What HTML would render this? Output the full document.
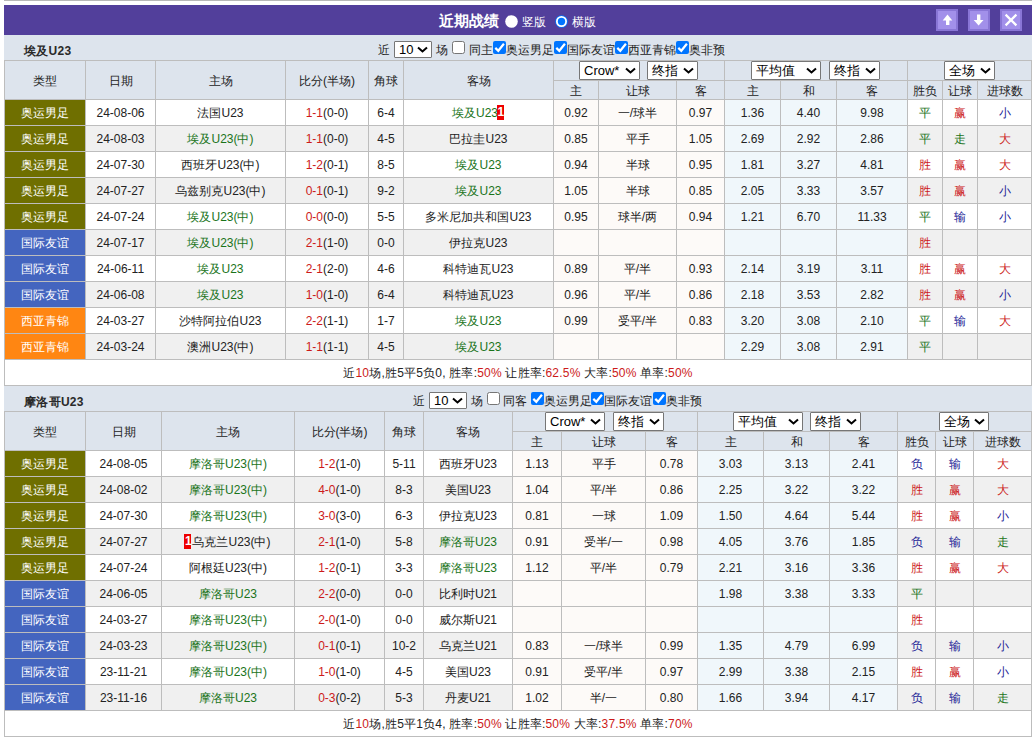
<!DOCTYPE html><html><head><meta charset="utf-8"><style>
html,body{margin:0;padding:0;background:#fff;}
body{width:1032px;height:738px;position:relative;overflow:hidden;font-family:"Liberation Sans",sans-serif;font-size:12px;color:#222;}
div{position:absolute;box-sizing:border-box;}
.c{text-align:center;white-space:nowrap;overflow:visible;}
.g{color:#1a741a}.r{color:#cc1a1a}.b{color:#1c2396}
.bd{display:inline-block;background:#e00;color:#fff;font-weight:bold;line-height:15px;height:15px;width:7px;text-align:center;overflow:hidden;vertical-align:baseline;position:relative;top:2.5px;left:-1px;letter-spacing:-0.5px}
</style></head><body>

<div style="left:4px;top:0px;width:1028px;height:1px;background:#b8b8b8"></div>
<div style="left:4px;top:5px;width:1028px;height:30px;background:#523f9b"></div>
<div style="left:439px;top:5px;width:62px;height:30px;color:#fff;font-weight:bold;font-size:15px;line-height:31px;white-space:nowrap">近期战绩</div>
<svg style="position:absolute;left:505px;top:15px" width="13" height="13"><circle cx="6.5" cy="6.5" r="6.3" fill="#fff"/></svg>
<div style="left:522px;top:5px;width:30px;height:30px;color:#fff;font-size:12px;line-height:35px;white-space:nowrap">竖版</div>
<svg style="position:absolute;left:555px;top:15px" width="13" height="13"><circle cx="6.5" cy="6.5" r="6.3" fill="#0075ff"/><circle cx="6.5" cy="6.5" r="5.5" fill="#fff"/><circle cx="6.5" cy="6.5" r="3.7" fill="#0075ff"/></svg>
<div style="left:572px;top:5px;width:30px;height:30px;color:#fff;font-size:12px;line-height:35px;white-space:nowrap">横版</div>
<div style="left:936px;top:9px;width:22px;height:22px;background:#a290ea;border:2px solid #8976d6"></div>
<svg style="position:absolute;left:936px;top:9px" width="22" height="22"><polygon points="11.5,5.5 16.3,11.5 6.7,11.5" fill="#fff"/><rect x="10" y="11" width="3.4" height="5" fill="#fff"/></svg>
<div style="left:968px;top:9px;width:22px;height:22px;background:#a290ea;border:2px solid #8976d6"></div>
<svg style="position:absolute;left:968px;top:9px" width="22" height="22"><polygon points="10.6,16.6 15.5,10.9 5.7,10.9" fill="#fff"/><rect x="9" y="5.5" width="3.4" height="5.6" fill="#fff"/></svg>
<div style="left:1000px;top:9px;width:22px;height:22px;background:#a290ea;border:2px solid #8976d6"></div>
<svg style="position:absolute;left:1000px;top:9px" width="22" height="22"><path d="M5.6,5.6 L16.4,16.4 M16.4,5.6 L5.6,16.4" stroke="#fff" stroke-width="2.2"/></svg>
<div style="left:4px;top:35px;width:1028px;height:25px;background:#dde4ed"></div>
<div style="left:24px;top:35px;width:200px;height:25px;font-weight:bold;font-size:12px;line-height:32px;color:#2a2a2a;white-space:nowrap;letter-spacing:0.3px">埃及U23</div>
<div style="left:378px;top:35px;width:100px;height:25px;font-size:12px;line-height:31px;color:#222;white-space:nowrap">近</div>
<div style="left:394px;top:41px;width:38px;height:17px;background:#fff;border:1px solid #767676;border-radius:1px;"></div>
<div class="c" style="left:399px;top:41px;width:28px;height:17px;font-size:13px;line-height:17px;color:#000;text-align:left;white-space:nowrap">10</div>
<svg style="position:absolute;left:417px;top:46px" width="11" height="8"><polyline points="1,1.5 5.5,5.5 10,1.5" fill="none" stroke="#000" stroke-width="2"/></svg>
<div style="left:436px;top:35px;width:100px;height:25px;font-size:12px;line-height:31px;color:#222;white-space:nowrap">场</div>
<svg style="position:absolute;left:452px;top:41px" width="13" height="13"><rect x="0.5" y="0.5" width="12" height="12" rx="2" fill="#fff" stroke="#767676" stroke-width="1"/></svg>
<div style="left:469px;top:35px;width:100px;height:25px;font-size:12px;line-height:31px;color:#222;white-space:nowrap">同主</div>
<svg style="position:absolute;left:493px;top:41px" width="13" height="13"><rect x="0" y="0" width="13" height="13" rx="2" fill="#0075ff"/><polyline points="2.3,6.9 5.3,9.8 10.9,2.8" fill="none" stroke="#fff" stroke-width="2.2"/></svg>
<div style="left:506px;top:35px;width:100px;height:25px;font-size:12px;line-height:31px;color:#222;white-space:nowrap">奥运男足</div>
<svg style="position:absolute;left:554px;top:41px" width="13" height="13"><rect x="0" y="0" width="13" height="13" rx="2" fill="#0075ff"/><polyline points="2.3,6.9 5.3,9.8 10.9,2.8" fill="none" stroke="#fff" stroke-width="2.2"/></svg>
<div style="left:567px;top:35px;width:100px;height:25px;font-size:12px;line-height:31px;color:#222;white-space:nowrap">国际友谊</div>
<svg style="position:absolute;left:615px;top:41px" width="13" height="13"><rect x="0" y="0" width="13" height="13" rx="2" fill="#0075ff"/><polyline points="2.3,6.9 5.3,9.8 10.9,2.8" fill="none" stroke="#fff" stroke-width="2.2"/></svg>
<div style="left:628px;top:35px;width:100px;height:25px;font-size:12px;line-height:31px;color:#222;white-space:nowrap">西亚青锦</div>
<svg style="position:absolute;left:676px;top:41px" width="13" height="13"><rect x="0" y="0" width="13" height="13" rx="2" fill="#0075ff"/><polyline points="2.3,6.9 5.3,9.8 10.9,2.8" fill="none" stroke="#fff" stroke-width="2.2"/></svg>
<div style="left:689px;top:35px;width:100px;height:25px;font-size:12px;line-height:31px;color:#222;white-space:nowrap">奥非预</div>
<div style="left:4px;top:60px;width:1028px;height:40px;background:#dde4ed"></div>
<div class="c" style="left:5px;top:62px;width:80px;height:38px;line-height:38px;color:#222">类型</div>
<div class="c" style="left:86px;top:62px;width:69px;height:38px;line-height:38px;color:#222">日期</div>
<div class="c" style="left:156px;top:62px;width:129px;height:38px;line-height:38px;color:#222">主场</div>
<div class="c" style="left:286px;top:62px;width:82px;height:38px;line-height:38px;color:#222">比分(半场)</div>
<div class="c" style="left:369px;top:62px;width:34px;height:38px;line-height:38px;color:#222">角球</div>
<div class="c" style="left:404px;top:62px;width:149px;height:38px;line-height:38px;color:#222">客场</div>
<div class="c" style="left:554px;top:82px;width:44px;height:18px;line-height:18px;color:#222">主</div>
<div class="c" style="left:599px;top:82px;width:77px;height:18px;line-height:18px;color:#222">让球</div>
<div class="c" style="left:677px;top:82px;width:47px;height:18px;line-height:18px;color:#222">客</div>
<div class="c" style="left:725px;top:82px;width:55px;height:18px;line-height:18px;color:#222">主</div>
<div class="c" style="left:781px;top:82px;width:55px;height:18px;line-height:18px;color:#222">和</div>
<div class="c" style="left:837px;top:82px;width:70px;height:18px;line-height:18px;color:#222">客</div>
<div class="c" style="left:908px;top:82px;width:34px;height:18px;line-height:18px;color:#222">胜负</div>
<div class="c" style="left:943px;top:82px;width:34px;height:18px;line-height:18px;color:#222">让球</div>
<div class="c" style="left:978px;top:82px;width:53px;height:18px;line-height:18px;color:#222">进球数</div>
<div style="left:85px;top:100px;width:468px;height:25px;background:#fff"></div>
<div style="left:907px;top:100px;width:124px;height:25px;background:#fff"></div>
<div style="left:553px;top:100px;width:171px;height:25px;background:#fdfaf8"></div>
<div style="left:724px;top:100px;width:183px;height:25px;background:#f0f7fb"></div>
<div style="left:5px;top:100px;width:80px;height:25px;background:#6f6f00"></div>
<div class="c" style="left:5px;top:101px;width:80px;height:25px;line-height:25px;color:#fff">奥运男足</div>
<div class="c" style="left:86px;top:101px;width:69px;height:25px;line-height:25px;">24-08-06</div>
<div class="c" style="left:156px;top:101px;width:129px;height:25px;line-height:25px;">法国U23</div>
<div class="c" style="left:286px;top:101px;width:82px;height:25px;line-height:25px;"><span class="r">1-1</span>(0-0)</div>
<div class="c" style="left:369px;top:101px;width:34px;height:25px;line-height:25px;">6-4</div>
<div class="c" style="left:404px;top:101px;width:149px;height:25px;line-height:25px;"><span class="g">埃及U23</span><span class="bd">1</span></div>
<div class="c" style="left:554px;top:101px;width:44px;height:25px;line-height:25px;">0.92</div>
<div class="c" style="left:599px;top:101px;width:77px;height:25px;line-height:25px;">一/球半</div>
<div class="c" style="left:677px;top:101px;width:47px;height:25px;line-height:25px;">0.97</div>
<div class="c" style="left:725px;top:101px;width:55px;height:25px;line-height:25px;">1.36</div>
<div class="c" style="left:781px;top:101px;width:55px;height:25px;line-height:25px;">4.40</div>
<div class="c" style="left:837px;top:101px;width:70px;height:25px;line-height:25px;">9.98</div>
<div class="c" style="left:908px;top:101px;width:34px;height:25px;line-height:25px;"><span class="g">平</span></div>
<div class="c" style="left:943px;top:101px;width:34px;height:25px;line-height:25px;"><span class="r">赢</span></div>
<div class="c" style="left:978px;top:101px;width:53px;height:25px;line-height:25px;"><span class="b">小</span></div>
<div style="left:85px;top:126px;width:468px;height:25px;background:#f0f0f0"></div>
<div style="left:907px;top:126px;width:124px;height:25px;background:#f0f0f0"></div>
<div style="left:553px;top:126px;width:171px;height:25px;background:#fdfaf8"></div>
<div style="left:724px;top:126px;width:183px;height:25px;background:#f0f7fb"></div>
<div style="left:5px;top:126px;width:80px;height:25px;background:#6f6f00"></div>
<div class="c" style="left:5px;top:127px;width:80px;height:25px;line-height:25px;color:#fff">奥运男足</div>
<div class="c" style="left:86px;top:127px;width:69px;height:25px;line-height:25px;">24-08-03</div>
<div class="c" style="left:156px;top:127px;width:129px;height:25px;line-height:25px;"><span class="g">埃及U23(中)</span></div>
<div class="c" style="left:286px;top:127px;width:82px;height:25px;line-height:25px;"><span class="r">1-1</span>(0-0)</div>
<div class="c" style="left:369px;top:127px;width:34px;height:25px;line-height:25px;">4-5</div>
<div class="c" style="left:404px;top:127px;width:149px;height:25px;line-height:25px;">巴拉圭U23</div>
<div class="c" style="left:554px;top:127px;width:44px;height:25px;line-height:25px;">0.85</div>
<div class="c" style="left:599px;top:127px;width:77px;height:25px;line-height:25px;">平手</div>
<div class="c" style="left:677px;top:127px;width:47px;height:25px;line-height:25px;">1.05</div>
<div class="c" style="left:725px;top:127px;width:55px;height:25px;line-height:25px;">2.69</div>
<div class="c" style="left:781px;top:127px;width:55px;height:25px;line-height:25px;">2.92</div>
<div class="c" style="left:837px;top:127px;width:70px;height:25px;line-height:25px;">2.86</div>
<div class="c" style="left:908px;top:127px;width:34px;height:25px;line-height:25px;"><span class="g">平</span></div>
<div class="c" style="left:943px;top:127px;width:34px;height:25px;line-height:25px;"><span class="g">走</span></div>
<div class="c" style="left:978px;top:127px;width:53px;height:25px;line-height:25px;"><span class="r">大</span></div>
<div style="left:85px;top:152px;width:468px;height:25px;background:#fff"></div>
<div style="left:907px;top:152px;width:124px;height:25px;background:#fff"></div>
<div style="left:553px;top:152px;width:171px;height:25px;background:#fdfaf8"></div>
<div style="left:724px;top:152px;width:183px;height:25px;background:#f0f7fb"></div>
<div style="left:5px;top:152px;width:80px;height:25px;background:#6f6f00"></div>
<div class="c" style="left:5px;top:153px;width:80px;height:25px;line-height:25px;color:#fff">奥运男足</div>
<div class="c" style="left:86px;top:153px;width:69px;height:25px;line-height:25px;">24-07-30</div>
<div class="c" style="left:156px;top:153px;width:129px;height:25px;line-height:25px;">西班牙U23(中)</div>
<div class="c" style="left:286px;top:153px;width:82px;height:25px;line-height:25px;"><span class="r">1-2</span>(0-1)</div>
<div class="c" style="left:369px;top:153px;width:34px;height:25px;line-height:25px;">8-5</div>
<div class="c" style="left:404px;top:153px;width:149px;height:25px;line-height:25px;"><span class="g">埃及U23</span></div>
<div class="c" style="left:554px;top:153px;width:44px;height:25px;line-height:25px;">0.94</div>
<div class="c" style="left:599px;top:153px;width:77px;height:25px;line-height:25px;">半球</div>
<div class="c" style="left:677px;top:153px;width:47px;height:25px;line-height:25px;">0.95</div>
<div class="c" style="left:725px;top:153px;width:55px;height:25px;line-height:25px;">1.81</div>
<div class="c" style="left:781px;top:153px;width:55px;height:25px;line-height:25px;">3.27</div>
<div class="c" style="left:837px;top:153px;width:70px;height:25px;line-height:25px;">4.81</div>
<div class="c" style="left:908px;top:153px;width:34px;height:25px;line-height:25px;"><span class="r">胜</span></div>
<div class="c" style="left:943px;top:153px;width:34px;height:25px;line-height:25px;"><span class="r">赢</span></div>
<div class="c" style="left:978px;top:153px;width:53px;height:25px;line-height:25px;"><span class="r">大</span></div>
<div style="left:85px;top:178px;width:468px;height:25px;background:#f0f0f0"></div>
<div style="left:907px;top:178px;width:124px;height:25px;background:#f0f0f0"></div>
<div style="left:553px;top:178px;width:171px;height:25px;background:#fdfaf8"></div>
<div style="left:724px;top:178px;width:183px;height:25px;background:#f0f7fb"></div>
<div style="left:5px;top:178px;width:80px;height:25px;background:#6f6f00"></div>
<div class="c" style="left:5px;top:179px;width:80px;height:25px;line-height:25px;color:#fff">奥运男足</div>
<div class="c" style="left:86px;top:179px;width:69px;height:25px;line-height:25px;">24-07-27</div>
<div class="c" style="left:156px;top:179px;width:129px;height:25px;line-height:25px;">乌兹别克U23(中)</div>
<div class="c" style="left:286px;top:179px;width:82px;height:25px;line-height:25px;"><span class="r">0-1</span>(0-1)</div>
<div class="c" style="left:369px;top:179px;width:34px;height:25px;line-height:25px;">9-2</div>
<div class="c" style="left:404px;top:179px;width:149px;height:25px;line-height:25px;"><span class="g">埃及U23</span></div>
<div class="c" style="left:554px;top:179px;width:44px;height:25px;line-height:25px;">1.05</div>
<div class="c" style="left:599px;top:179px;width:77px;height:25px;line-height:25px;">半球</div>
<div class="c" style="left:677px;top:179px;width:47px;height:25px;line-height:25px;">0.85</div>
<div class="c" style="left:725px;top:179px;width:55px;height:25px;line-height:25px;">2.05</div>
<div class="c" style="left:781px;top:179px;width:55px;height:25px;line-height:25px;">3.33</div>
<div class="c" style="left:837px;top:179px;width:70px;height:25px;line-height:25px;">3.57</div>
<div class="c" style="left:908px;top:179px;width:34px;height:25px;line-height:25px;"><span class="r">胜</span></div>
<div class="c" style="left:943px;top:179px;width:34px;height:25px;line-height:25px;"><span class="r">赢</span></div>
<div class="c" style="left:978px;top:179px;width:53px;height:25px;line-height:25px;"><span class="b">小</span></div>
<div style="left:85px;top:204px;width:468px;height:25px;background:#fff"></div>
<div style="left:907px;top:204px;width:124px;height:25px;background:#fff"></div>
<div style="left:553px;top:204px;width:171px;height:25px;background:#fdfaf8"></div>
<div style="left:724px;top:204px;width:183px;height:25px;background:#f0f7fb"></div>
<div style="left:5px;top:204px;width:80px;height:25px;background:#6f6f00"></div>
<div class="c" style="left:5px;top:205px;width:80px;height:25px;line-height:25px;color:#fff">奥运男足</div>
<div class="c" style="left:86px;top:205px;width:69px;height:25px;line-height:25px;">24-07-24</div>
<div class="c" style="left:156px;top:205px;width:129px;height:25px;line-height:25px;"><span class="g">埃及U23(中)</span></div>
<div class="c" style="left:286px;top:205px;width:82px;height:25px;line-height:25px;"><span class="r">0-0</span>(0-0)</div>
<div class="c" style="left:369px;top:205px;width:34px;height:25px;line-height:25px;">5-5</div>
<div class="c" style="left:404px;top:205px;width:149px;height:25px;line-height:25px;">多米尼加共和国U23</div>
<div class="c" style="left:554px;top:205px;width:44px;height:25px;line-height:25px;">0.95</div>
<div class="c" style="left:599px;top:205px;width:77px;height:25px;line-height:25px;">球半/两</div>
<div class="c" style="left:677px;top:205px;width:47px;height:25px;line-height:25px;">0.94</div>
<div class="c" style="left:725px;top:205px;width:55px;height:25px;line-height:25px;">1.21</div>
<div class="c" style="left:781px;top:205px;width:55px;height:25px;line-height:25px;">6.70</div>
<div class="c" style="left:837px;top:205px;width:70px;height:25px;line-height:25px;">11.33</div>
<div class="c" style="left:908px;top:205px;width:34px;height:25px;line-height:25px;"><span class="g">平</span></div>
<div class="c" style="left:943px;top:205px;width:34px;height:25px;line-height:25px;"><span class="b">输</span></div>
<div class="c" style="left:978px;top:205px;width:53px;height:25px;line-height:25px;"><span class="b">小</span></div>
<div style="left:85px;top:230px;width:468px;height:25px;background:#f0f0f0"></div>
<div style="left:907px;top:230px;width:124px;height:25px;background:#f0f0f0"></div>
<div style="left:553px;top:230px;width:171px;height:25px;background:#fdfaf8"></div>
<div style="left:724px;top:230px;width:183px;height:25px;background:#f0f7fb"></div>
<div style="left:5px;top:230px;width:80px;height:25px;background:#4465bf"></div>
<div class="c" style="left:5px;top:231px;width:80px;height:25px;line-height:25px;color:#fff">国际友谊</div>
<div class="c" style="left:86px;top:231px;width:69px;height:25px;line-height:25px;">24-07-17</div>
<div class="c" style="left:156px;top:231px;width:129px;height:25px;line-height:25px;"><span class="g">埃及U23(中)</span></div>
<div class="c" style="left:286px;top:231px;width:82px;height:25px;line-height:25px;"><span class="r">2-1</span>(1-0)</div>
<div class="c" style="left:369px;top:231px;width:34px;height:25px;line-height:25px;">0-0</div>
<div class="c" style="left:404px;top:231px;width:149px;height:25px;line-height:25px;">伊拉克U23</div>
<div class="c" style="left:554px;top:231px;width:44px;height:25px;line-height:25px;"></div>
<div class="c" style="left:599px;top:231px;width:77px;height:25px;line-height:25px;"></div>
<div class="c" style="left:677px;top:231px;width:47px;height:25px;line-height:25px;"></div>
<div class="c" style="left:725px;top:231px;width:55px;height:25px;line-height:25px;"></div>
<div class="c" style="left:781px;top:231px;width:55px;height:25px;line-height:25px;"></div>
<div class="c" style="left:837px;top:231px;width:70px;height:25px;line-height:25px;"></div>
<div class="c" style="left:908px;top:231px;width:34px;height:25px;line-height:25px;"><span class="r">胜</span></div>
<div class="c" style="left:943px;top:231px;width:34px;height:25px;line-height:25px;"></div>
<div class="c" style="left:978px;top:231px;width:53px;height:25px;line-height:25px;"></div>
<div style="left:85px;top:256px;width:468px;height:25px;background:#fff"></div>
<div style="left:907px;top:256px;width:124px;height:25px;background:#fff"></div>
<div style="left:553px;top:256px;width:171px;height:25px;background:#fdfaf8"></div>
<div style="left:724px;top:256px;width:183px;height:25px;background:#f0f7fb"></div>
<div style="left:5px;top:256px;width:80px;height:25px;background:#4465bf"></div>
<div class="c" style="left:5px;top:257px;width:80px;height:25px;line-height:25px;color:#fff">国际友谊</div>
<div class="c" style="left:86px;top:257px;width:69px;height:25px;line-height:25px;">24-06-11</div>
<div class="c" style="left:156px;top:257px;width:129px;height:25px;line-height:25px;"><span class="g">埃及U23</span></div>
<div class="c" style="left:286px;top:257px;width:82px;height:25px;line-height:25px;"><span class="r">2-1</span>(2-0)</div>
<div class="c" style="left:369px;top:257px;width:34px;height:25px;line-height:25px;">4-6</div>
<div class="c" style="left:404px;top:257px;width:149px;height:25px;line-height:25px;">科特迪瓦U23</div>
<div class="c" style="left:554px;top:257px;width:44px;height:25px;line-height:25px;">0.89</div>
<div class="c" style="left:599px;top:257px;width:77px;height:25px;line-height:25px;">平/半</div>
<div class="c" style="left:677px;top:257px;width:47px;height:25px;line-height:25px;">0.93</div>
<div class="c" style="left:725px;top:257px;width:55px;height:25px;line-height:25px;">2.14</div>
<div class="c" style="left:781px;top:257px;width:55px;height:25px;line-height:25px;">3.19</div>
<div class="c" style="left:837px;top:257px;width:70px;height:25px;line-height:25px;">3.11</div>
<div class="c" style="left:908px;top:257px;width:34px;height:25px;line-height:25px;"><span class="r">胜</span></div>
<div class="c" style="left:943px;top:257px;width:34px;height:25px;line-height:25px;"><span class="r">赢</span></div>
<div class="c" style="left:978px;top:257px;width:53px;height:25px;line-height:25px;"><span class="r">大</span></div>
<div style="left:85px;top:282px;width:468px;height:25px;background:#f0f0f0"></div>
<div style="left:907px;top:282px;width:124px;height:25px;background:#f0f0f0"></div>
<div style="left:553px;top:282px;width:171px;height:25px;background:#fdfaf8"></div>
<div style="left:724px;top:282px;width:183px;height:25px;background:#f0f7fb"></div>
<div style="left:5px;top:282px;width:80px;height:25px;background:#4465bf"></div>
<div class="c" style="left:5px;top:283px;width:80px;height:25px;line-height:25px;color:#fff">国际友谊</div>
<div class="c" style="left:86px;top:283px;width:69px;height:25px;line-height:25px;">24-06-08</div>
<div class="c" style="left:156px;top:283px;width:129px;height:25px;line-height:25px;"><span class="g">埃及U23</span></div>
<div class="c" style="left:286px;top:283px;width:82px;height:25px;line-height:25px;"><span class="r">1-0</span>(1-0)</div>
<div class="c" style="left:369px;top:283px;width:34px;height:25px;line-height:25px;">6-4</div>
<div class="c" style="left:404px;top:283px;width:149px;height:25px;line-height:25px;">科特迪瓦U23</div>
<div class="c" style="left:554px;top:283px;width:44px;height:25px;line-height:25px;">0.96</div>
<div class="c" style="left:599px;top:283px;width:77px;height:25px;line-height:25px;">平/半</div>
<div class="c" style="left:677px;top:283px;width:47px;height:25px;line-height:25px;">0.86</div>
<div class="c" style="left:725px;top:283px;width:55px;height:25px;line-height:25px;">2.18</div>
<div class="c" style="left:781px;top:283px;width:55px;height:25px;line-height:25px;">3.53</div>
<div class="c" style="left:837px;top:283px;width:70px;height:25px;line-height:25px;">2.82</div>
<div class="c" style="left:908px;top:283px;width:34px;height:25px;line-height:25px;"><span class="r">胜</span></div>
<div class="c" style="left:943px;top:283px;width:34px;height:25px;line-height:25px;"><span class="r">赢</span></div>
<div class="c" style="left:978px;top:283px;width:53px;height:25px;line-height:25px;"><span class="b">小</span></div>
<div style="left:85px;top:308px;width:468px;height:25px;background:#fff"></div>
<div style="left:907px;top:308px;width:124px;height:25px;background:#fff"></div>
<div style="left:553px;top:308px;width:171px;height:25px;background:#fdfaf8"></div>
<div style="left:724px;top:308px;width:183px;height:25px;background:#f0f7fb"></div>
<div style="left:5px;top:308px;width:80px;height:25px;background:#ff8612"></div>
<div class="c" style="left:5px;top:309px;width:80px;height:25px;line-height:25px;color:#fff">西亚青锦</div>
<div class="c" style="left:86px;top:309px;width:69px;height:25px;line-height:25px;">24-03-27</div>
<div class="c" style="left:156px;top:309px;width:129px;height:25px;line-height:25px;">沙特阿拉伯U23</div>
<div class="c" style="left:286px;top:309px;width:82px;height:25px;line-height:25px;"><span class="r">2-2</span>(1-1)</div>
<div class="c" style="left:369px;top:309px;width:34px;height:25px;line-height:25px;">1-7</div>
<div class="c" style="left:404px;top:309px;width:149px;height:25px;line-height:25px;"><span class="g">埃及U23</span></div>
<div class="c" style="left:554px;top:309px;width:44px;height:25px;line-height:25px;">0.99</div>
<div class="c" style="left:599px;top:309px;width:77px;height:25px;line-height:25px;">受平/半</div>
<div class="c" style="left:677px;top:309px;width:47px;height:25px;line-height:25px;">0.83</div>
<div class="c" style="left:725px;top:309px;width:55px;height:25px;line-height:25px;">3.20</div>
<div class="c" style="left:781px;top:309px;width:55px;height:25px;line-height:25px;">3.08</div>
<div class="c" style="left:837px;top:309px;width:70px;height:25px;line-height:25px;">2.10</div>
<div class="c" style="left:908px;top:309px;width:34px;height:25px;line-height:25px;"><span class="g">平</span></div>
<div class="c" style="left:943px;top:309px;width:34px;height:25px;line-height:25px;"><span class="b">输</span></div>
<div class="c" style="left:978px;top:309px;width:53px;height:25px;line-height:25px;"><span class="r">大</span></div>
<div style="left:85px;top:334px;width:468px;height:25px;background:#f0f0f0"></div>
<div style="left:907px;top:334px;width:124px;height:25px;background:#f0f0f0"></div>
<div style="left:553px;top:334px;width:171px;height:25px;background:#fdfaf8"></div>
<div style="left:724px;top:334px;width:183px;height:25px;background:#f0f7fb"></div>
<div style="left:5px;top:334px;width:80px;height:25px;background:#ff8612"></div>
<div class="c" style="left:5px;top:335px;width:80px;height:25px;line-height:25px;color:#fff">西亚青锦</div>
<div class="c" style="left:86px;top:335px;width:69px;height:25px;line-height:25px;">24-03-24</div>
<div class="c" style="left:156px;top:335px;width:129px;height:25px;line-height:25px;">澳洲U23(中)</div>
<div class="c" style="left:286px;top:335px;width:82px;height:25px;line-height:25px;"><span class="r">1-1</span>(1-1)</div>
<div class="c" style="left:369px;top:335px;width:34px;height:25px;line-height:25px;">4-5</div>
<div class="c" style="left:404px;top:335px;width:149px;height:25px;line-height:25px;"><span class="g">埃及U23</span></div>
<div class="c" style="left:554px;top:335px;width:44px;height:25px;line-height:25px;"></div>
<div class="c" style="left:599px;top:335px;width:77px;height:25px;line-height:25px;"></div>
<div class="c" style="left:677px;top:335px;width:47px;height:25px;line-height:25px;"></div>
<div class="c" style="left:725px;top:335px;width:55px;height:25px;line-height:25px;">2.29</div>
<div class="c" style="left:781px;top:335px;width:55px;height:25px;line-height:25px;">3.08</div>
<div class="c" style="left:837px;top:335px;width:70px;height:25px;line-height:25px;">2.91</div>
<div class="c" style="left:908px;top:335px;width:34px;height:25px;line-height:25px;"><span class="g">平</span></div>
<div class="c" style="left:943px;top:335px;width:34px;height:25px;line-height:25px;"></div>
<div class="c" style="left:978px;top:335px;width:53px;height:25px;line-height:25px;"></div>
<div style="left:5px;top:360px;width:1026px;height:25px;background:#fff"></div>
<div class="c" style="left:5px;top:361px;width:1026px;height:25px;line-height:25px;letter-spacing:0.2px">近<span class="r">10</span>场,胜5平5负0, 胜率:<span class="r">50%</span> 让胜率:<span class="r">62.5%</span> 大率:<span class="r">50%</span> 单率:<span class="r">50%</span></div>
<div style="left:4px;top:60px;width:1028px;height:1px;background:#bdbdbd"></div>
<div style="left:553px;top:80px;width:479px;height:1px;background:#bdbdbd"></div>
<div style="left:4px;top:99px;width:1028px;height:1px;background:#bdbdbd"></div>
<div style="left:4px;top:125px;width:1028px;height:1px;background:#bdbdbd"></div>
<div style="left:4px;top:151px;width:1028px;height:1px;background:#bdbdbd"></div>
<div style="left:4px;top:177px;width:1028px;height:1px;background:#bdbdbd"></div>
<div style="left:4px;top:203px;width:1028px;height:1px;background:#bdbdbd"></div>
<div style="left:4px;top:229px;width:1028px;height:1px;background:#bdbdbd"></div>
<div style="left:4px;top:255px;width:1028px;height:1px;background:#bdbdbd"></div>
<div style="left:4px;top:281px;width:1028px;height:1px;background:#bdbdbd"></div>
<div style="left:4px;top:307px;width:1028px;height:1px;background:#bdbdbd"></div>
<div style="left:4px;top:333px;width:1028px;height:1px;background:#bdbdbd"></div>
<div style="left:4px;top:359px;width:1028px;height:1px;background:#bdbdbd"></div>
<div style="left:4px;top:385px;width:1028px;height:1px;background:#bdbdbd"></div>
<div style="left:4px;top:60px;width:1px;height:326px;background:#bdbdbd"></div>
<div style="left:1031px;top:60px;width:1px;height:326px;background:#bdbdbd"></div>
<div style="left:85px;top:60px;width:1px;height:300px;background:#bdbdbd"></div>
<div style="left:155px;top:60px;width:1px;height:300px;background:#bdbdbd"></div>
<div style="left:285px;top:60px;width:1px;height:300px;background:#bdbdbd"></div>
<div style="left:368px;top:60px;width:1px;height:300px;background:#bdbdbd"></div>
<div style="left:403px;top:60px;width:1px;height:300px;background:#bdbdbd"></div>
<div style="left:553px;top:60px;width:1px;height:300px;background:#bdbdbd"></div>
<div style="left:598px;top:80px;width:1px;height:280px;background:#bdbdbd"></div>
<div style="left:676px;top:80px;width:1px;height:280px;background:#bdbdbd"></div>
<div style="left:724px;top:60px;width:1px;height:300px;background:#bdbdbd"></div>
<div style="left:780px;top:80px;width:1px;height:280px;background:#bdbdbd"></div>
<div style="left:836px;top:80px;width:1px;height:280px;background:#bdbdbd"></div>
<div style="left:907px;top:60px;width:1px;height:300px;background:#bdbdbd"></div>
<div style="left:942px;top:80px;width:1px;height:280px;background:#bdbdbd"></div>
<div style="left:977px;top:80px;width:1px;height:280px;background:#bdbdbd"></div>
<div style="left:579px;top:61px;width:61px;height:19px;background:#fff;border:1px solid #767676;border-radius:1px;"></div>
<div class="c" style="left:584px;top:61px;width:51px;height:19px;font-size:13px;line-height:19px;color:#000;text-align:left;white-space:nowrap">Crow*</div>
<svg style="position:absolute;left:625px;top:67px" width="11" height="8"><polyline points="1,1.5 5.5,5.5 10,1.5" fill="none" stroke="#000" stroke-width="2"/></svg>
<div style="left:647px;top:61px;width:51px;height:19px;background:#fff;border:1px solid #767676;border-radius:1px;"></div>
<div class="c" style="left:652px;top:61px;width:41px;height:19px;font-size:13px;line-height:19px;color:#000;text-align:left;white-space:nowrap">终指</div>
<svg style="position:absolute;left:683px;top:67px" width="11" height="8"><polyline points="1,1.5 5.5,5.5 10,1.5" fill="none" stroke="#000" stroke-width="2"/></svg>
<div style="left:751px;top:61px;width:70px;height:19px;background:#fff;border:1px solid #767676;border-radius:1px;"></div>
<div class="c" style="left:756px;top:61px;width:60px;height:19px;font-size:13px;line-height:19px;color:#000;text-align:left;white-space:nowrap">平均值</div>
<svg style="position:absolute;left:806px;top:67px" width="11" height="8"><polyline points="1,1.5 5.5,5.5 10,1.5" fill="none" stroke="#000" stroke-width="2"/></svg>
<div style="left:829px;top:61px;width:51px;height:19px;background:#fff;border:1px solid #767676;border-radius:1px;"></div>
<div class="c" style="left:834px;top:61px;width:41px;height:19px;font-size:13px;line-height:19px;color:#000;text-align:left;white-space:nowrap">终指</div>
<svg style="position:absolute;left:865px;top:67px" width="11" height="8"><polyline points="1,1.5 5.5,5.5 10,1.5" fill="none" stroke="#000" stroke-width="2"/></svg>
<div style="left:944px;top:61px;width:51px;height:19px;background:#fff;border:1px solid #767676;border-radius:1px;"></div>
<div class="c" style="left:949px;top:61px;width:41px;height:19px;font-size:13px;line-height:19px;color:#000;text-align:left;white-space:nowrap">全场</div>
<svg style="position:absolute;left:980px;top:67px" width="11" height="8"><polyline points="1,1.5 5.5,5.5 10,1.5" fill="none" stroke="#000" stroke-width="2"/></svg>
<div style="left:4px;top:386px;width:1028px;height:25px;background:#dde4ed"></div>
<div style="left:24px;top:386px;width:200px;height:25px;font-weight:bold;font-size:12px;line-height:32px;color:#2a2a2a;white-space:nowrap;letter-spacing:0.3px">摩洛哥U23</div>
<div style="left:413px;top:386px;width:100px;height:25px;font-size:12px;line-height:31px;color:#222;white-space:nowrap">近</div>
<div style="left:429px;top:392px;width:38px;height:17px;background:#fff;border:1px solid #767676;border-radius:1px;"></div>
<div class="c" style="left:434px;top:392px;width:28px;height:17px;font-size:13px;line-height:17px;color:#000;text-align:left;white-space:nowrap">10</div>
<svg style="position:absolute;left:452px;top:397px" width="11" height="8"><polyline points="1,1.5 5.5,5.5 10,1.5" fill="none" stroke="#000" stroke-width="2"/></svg>
<div style="left:471px;top:386px;width:100px;height:25px;font-size:12px;line-height:31px;color:#222;white-space:nowrap">场</div>
<svg style="position:absolute;left:487px;top:392px" width="13" height="13"><rect x="0.5" y="0.5" width="12" height="12" rx="2" fill="#fff" stroke="#767676" stroke-width="1"/></svg>
<div style="left:503px;top:386px;width:100px;height:25px;font-size:12px;line-height:31px;color:#222;white-space:nowrap">同客</div>
<svg style="position:absolute;left:531px;top:392px" width="13" height="13"><rect x="0" y="0" width="13" height="13" rx="2" fill="#0075ff"/><polyline points="2.3,6.9 5.3,9.8 10.9,2.8" fill="none" stroke="#fff" stroke-width="2.2"/></svg>
<div style="left:544px;top:386px;width:100px;height:25px;font-size:12px;line-height:31px;color:#222;white-space:nowrap">奥运男足</div>
<svg style="position:absolute;left:591px;top:392px" width="13" height="13"><rect x="0" y="0" width="13" height="13" rx="2" fill="#0075ff"/><polyline points="2.3,6.9 5.3,9.8 10.9,2.8" fill="none" stroke="#fff" stroke-width="2.2"/></svg>
<div style="left:604px;top:386px;width:100px;height:25px;font-size:12px;line-height:31px;color:#222;white-space:nowrap">国际友谊</div>
<svg style="position:absolute;left:653px;top:392px" width="13" height="13"><rect x="0" y="0" width="13" height="13" rx="2" fill="#0075ff"/><polyline points="2.3,6.9 5.3,9.8 10.9,2.8" fill="none" stroke="#fff" stroke-width="2.2"/></svg>
<div style="left:666px;top:386px;width:100px;height:25px;font-size:12px;line-height:31px;color:#222;white-space:nowrap">奥非预</div>
<div style="left:4px;top:411px;width:1028px;height:40px;background:#dde4ed"></div>
<div class="c" style="left:5px;top:413px;width:80px;height:38px;line-height:38px;color:#222">类型</div>
<div class="c" style="left:86px;top:413px;width:75px;height:38px;line-height:38px;color:#222">日期</div>
<div class="c" style="left:162px;top:413px;width:132px;height:38px;line-height:38px;color:#222">主场</div>
<div class="c" style="left:295px;top:413px;width:89px;height:38px;line-height:38px;color:#222">比分(半场)</div>
<div class="c" style="left:385px;top:413px;width:38px;height:38px;line-height:38px;color:#222">角球</div>
<div class="c" style="left:424px;top:413px;width:88px;height:38px;line-height:38px;color:#222">客场</div>
<div class="c" style="left:513px;top:433px;width:48px;height:18px;line-height:18px;color:#222">主</div>
<div class="c" style="left:562px;top:433px;width:83px;height:18px;line-height:18px;color:#222">让球</div>
<div class="c" style="left:646px;top:433px;width:51px;height:18px;line-height:18px;color:#222">客</div>
<div class="c" style="left:698px;top:433px;width:65px;height:18px;line-height:18px;color:#222">主</div>
<div class="c" style="left:764px;top:433px;width:65px;height:18px;line-height:18px;color:#222">和</div>
<div class="c" style="left:830px;top:433px;width:67px;height:18px;line-height:18px;color:#222">客</div>
<div class="c" style="left:898px;top:433px;width:37px;height:18px;line-height:18px;color:#222">胜负</div>
<div class="c" style="left:936px;top:433px;width:37px;height:18px;line-height:18px;color:#222">让球</div>
<div class="c" style="left:974px;top:433px;width:57px;height:18px;line-height:18px;color:#222">进球数</div>
<div style="left:85px;top:451px;width:427px;height:25px;background:#fff"></div>
<div style="left:897px;top:451px;width:134px;height:25px;background:#fff"></div>
<div style="left:512px;top:451px;width:185px;height:25px;background:#fdfaf8"></div>
<div style="left:697px;top:451px;width:200px;height:25px;background:#f0f7fb"></div>
<div style="left:5px;top:451px;width:80px;height:25px;background:#6f6f00"></div>
<div class="c" style="left:5px;top:452px;width:80px;height:25px;line-height:25px;color:#fff">奥运男足</div>
<div class="c" style="left:86px;top:452px;width:75px;height:25px;line-height:25px;">24-08-05</div>
<div class="c" style="left:162px;top:452px;width:132px;height:25px;line-height:25px;"><span class="g">摩洛哥U23(中)</span></div>
<div class="c" style="left:295px;top:452px;width:89px;height:25px;line-height:25px;"><span class="r">1-2</span>(1-0)</div>
<div class="c" style="left:385px;top:452px;width:38px;height:25px;line-height:25px;">5-11</div>
<div class="c" style="left:424px;top:452px;width:88px;height:25px;line-height:25px;">西班牙U23</div>
<div class="c" style="left:513px;top:452px;width:48px;height:25px;line-height:25px;">1.13</div>
<div class="c" style="left:562px;top:452px;width:83px;height:25px;line-height:25px;">平手</div>
<div class="c" style="left:646px;top:452px;width:51px;height:25px;line-height:25px;">0.78</div>
<div class="c" style="left:698px;top:452px;width:65px;height:25px;line-height:25px;">3.03</div>
<div class="c" style="left:764px;top:452px;width:65px;height:25px;line-height:25px;">3.13</div>
<div class="c" style="left:830px;top:452px;width:67px;height:25px;line-height:25px;">2.41</div>
<div class="c" style="left:898px;top:452px;width:37px;height:25px;line-height:25px;"><span class="b">负</span></div>
<div class="c" style="left:936px;top:452px;width:37px;height:25px;line-height:25px;"><span class="b">输</span></div>
<div class="c" style="left:974px;top:452px;width:57px;height:25px;line-height:25px;"><span class="r">大</span></div>
<div style="left:85px;top:477px;width:427px;height:25px;background:#f0f0f0"></div>
<div style="left:897px;top:477px;width:134px;height:25px;background:#f0f0f0"></div>
<div style="left:512px;top:477px;width:185px;height:25px;background:#fdfaf8"></div>
<div style="left:697px;top:477px;width:200px;height:25px;background:#f0f7fb"></div>
<div style="left:5px;top:477px;width:80px;height:25px;background:#6f6f00"></div>
<div class="c" style="left:5px;top:478px;width:80px;height:25px;line-height:25px;color:#fff">奥运男足</div>
<div class="c" style="left:86px;top:478px;width:75px;height:25px;line-height:25px;">24-08-02</div>
<div class="c" style="left:162px;top:478px;width:132px;height:25px;line-height:25px;"><span class="g">摩洛哥U23(中)</span></div>
<div class="c" style="left:295px;top:478px;width:89px;height:25px;line-height:25px;"><span class="r">4-0</span>(1-0)</div>
<div class="c" style="left:385px;top:478px;width:38px;height:25px;line-height:25px;">8-3</div>
<div class="c" style="left:424px;top:478px;width:88px;height:25px;line-height:25px;">美国U23</div>
<div class="c" style="left:513px;top:478px;width:48px;height:25px;line-height:25px;">1.04</div>
<div class="c" style="left:562px;top:478px;width:83px;height:25px;line-height:25px;">平/半</div>
<div class="c" style="left:646px;top:478px;width:51px;height:25px;line-height:25px;">0.86</div>
<div class="c" style="left:698px;top:478px;width:65px;height:25px;line-height:25px;">2.25</div>
<div class="c" style="left:764px;top:478px;width:65px;height:25px;line-height:25px;">3.22</div>
<div class="c" style="left:830px;top:478px;width:67px;height:25px;line-height:25px;">3.22</div>
<div class="c" style="left:898px;top:478px;width:37px;height:25px;line-height:25px;"><span class="r">胜</span></div>
<div class="c" style="left:936px;top:478px;width:37px;height:25px;line-height:25px;"><span class="r">赢</span></div>
<div class="c" style="left:974px;top:478px;width:57px;height:25px;line-height:25px;"><span class="r">大</span></div>
<div style="left:85px;top:503px;width:427px;height:25px;background:#fff"></div>
<div style="left:897px;top:503px;width:134px;height:25px;background:#fff"></div>
<div style="left:512px;top:503px;width:185px;height:25px;background:#fdfaf8"></div>
<div style="left:697px;top:503px;width:200px;height:25px;background:#f0f7fb"></div>
<div style="left:5px;top:503px;width:80px;height:25px;background:#6f6f00"></div>
<div class="c" style="left:5px;top:504px;width:80px;height:25px;line-height:25px;color:#fff">奥运男足</div>
<div class="c" style="left:86px;top:504px;width:75px;height:25px;line-height:25px;">24-07-30</div>
<div class="c" style="left:162px;top:504px;width:132px;height:25px;line-height:25px;"><span class="g">摩洛哥U23(中)</span></div>
<div class="c" style="left:295px;top:504px;width:89px;height:25px;line-height:25px;"><span class="r">3-0</span>(3-0)</div>
<div class="c" style="left:385px;top:504px;width:38px;height:25px;line-height:25px;">6-3</div>
<div class="c" style="left:424px;top:504px;width:88px;height:25px;line-height:25px;">伊拉克U23</div>
<div class="c" style="left:513px;top:504px;width:48px;height:25px;line-height:25px;">0.81</div>
<div class="c" style="left:562px;top:504px;width:83px;height:25px;line-height:25px;">一球</div>
<div class="c" style="left:646px;top:504px;width:51px;height:25px;line-height:25px;">1.09</div>
<div class="c" style="left:698px;top:504px;width:65px;height:25px;line-height:25px;">1.50</div>
<div class="c" style="left:764px;top:504px;width:65px;height:25px;line-height:25px;">4.64</div>
<div class="c" style="left:830px;top:504px;width:67px;height:25px;line-height:25px;">5.44</div>
<div class="c" style="left:898px;top:504px;width:37px;height:25px;line-height:25px;"><span class="r">胜</span></div>
<div class="c" style="left:936px;top:504px;width:37px;height:25px;line-height:25px;"><span class="r">赢</span></div>
<div class="c" style="left:974px;top:504px;width:57px;height:25px;line-height:25px;"><span class="b">小</span></div>
<div style="left:85px;top:529px;width:427px;height:25px;background:#f0f0f0"></div>
<div style="left:897px;top:529px;width:134px;height:25px;background:#f0f0f0"></div>
<div style="left:512px;top:529px;width:185px;height:25px;background:#fdfaf8"></div>
<div style="left:697px;top:529px;width:200px;height:25px;background:#f0f7fb"></div>
<div style="left:5px;top:529px;width:80px;height:25px;background:#6f6f00"></div>
<div class="c" style="left:5px;top:530px;width:80px;height:25px;line-height:25px;color:#fff">奥运男足</div>
<div class="c" style="left:86px;top:530px;width:75px;height:25px;line-height:25px;">24-07-27</div>
<div class="c" style="left:162px;top:530px;width:132px;height:25px;line-height:25px;"><span class="bd">1</span>乌克兰U23(中)</div>
<div class="c" style="left:295px;top:530px;width:89px;height:25px;line-height:25px;"><span class="r">2-1</span>(1-0)</div>
<div class="c" style="left:385px;top:530px;width:38px;height:25px;line-height:25px;">5-8</div>
<div class="c" style="left:424px;top:530px;width:88px;height:25px;line-height:25px;"><span class="g">摩洛哥U23</span></div>
<div class="c" style="left:513px;top:530px;width:48px;height:25px;line-height:25px;">0.91</div>
<div class="c" style="left:562px;top:530px;width:83px;height:25px;line-height:25px;">受半/一</div>
<div class="c" style="left:646px;top:530px;width:51px;height:25px;line-height:25px;">0.98</div>
<div class="c" style="left:698px;top:530px;width:65px;height:25px;line-height:25px;">4.05</div>
<div class="c" style="left:764px;top:530px;width:65px;height:25px;line-height:25px;">3.76</div>
<div class="c" style="left:830px;top:530px;width:67px;height:25px;line-height:25px;">1.85</div>
<div class="c" style="left:898px;top:530px;width:37px;height:25px;line-height:25px;"><span class="b">负</span></div>
<div class="c" style="left:936px;top:530px;width:37px;height:25px;line-height:25px;"><span class="b">输</span></div>
<div class="c" style="left:974px;top:530px;width:57px;height:25px;line-height:25px;"><span class="g">走</span></div>
<div style="left:85px;top:555px;width:427px;height:25px;background:#fff"></div>
<div style="left:897px;top:555px;width:134px;height:25px;background:#fff"></div>
<div style="left:512px;top:555px;width:185px;height:25px;background:#fdfaf8"></div>
<div style="left:697px;top:555px;width:200px;height:25px;background:#f0f7fb"></div>
<div style="left:5px;top:555px;width:80px;height:25px;background:#6f6f00"></div>
<div class="c" style="left:5px;top:556px;width:80px;height:25px;line-height:25px;color:#fff">奥运男足</div>
<div class="c" style="left:86px;top:556px;width:75px;height:25px;line-height:25px;">24-07-24</div>
<div class="c" style="left:162px;top:556px;width:132px;height:25px;line-height:25px;">阿根廷U23(中)</div>
<div class="c" style="left:295px;top:556px;width:89px;height:25px;line-height:25px;"><span class="r">1-2</span>(0-1)</div>
<div class="c" style="left:385px;top:556px;width:38px;height:25px;line-height:25px;">3-3</div>
<div class="c" style="left:424px;top:556px;width:88px;height:25px;line-height:25px;"><span class="g">摩洛哥U23</span></div>
<div class="c" style="left:513px;top:556px;width:48px;height:25px;line-height:25px;">1.12</div>
<div class="c" style="left:562px;top:556px;width:83px;height:25px;line-height:25px;">平/半</div>
<div class="c" style="left:646px;top:556px;width:51px;height:25px;line-height:25px;">0.79</div>
<div class="c" style="left:698px;top:556px;width:65px;height:25px;line-height:25px;">2.21</div>
<div class="c" style="left:764px;top:556px;width:65px;height:25px;line-height:25px;">3.16</div>
<div class="c" style="left:830px;top:556px;width:67px;height:25px;line-height:25px;">3.36</div>
<div class="c" style="left:898px;top:556px;width:37px;height:25px;line-height:25px;"><span class="r">胜</span></div>
<div class="c" style="left:936px;top:556px;width:37px;height:25px;line-height:25px;"><span class="r">赢</span></div>
<div class="c" style="left:974px;top:556px;width:57px;height:25px;line-height:25px;"><span class="r">大</span></div>
<div style="left:85px;top:581px;width:427px;height:25px;background:#f0f0f0"></div>
<div style="left:897px;top:581px;width:134px;height:25px;background:#f0f0f0"></div>
<div style="left:512px;top:581px;width:185px;height:25px;background:#fdfaf8"></div>
<div style="left:697px;top:581px;width:200px;height:25px;background:#f0f7fb"></div>
<div style="left:5px;top:581px;width:80px;height:25px;background:#4465bf"></div>
<div class="c" style="left:5px;top:582px;width:80px;height:25px;line-height:25px;color:#fff">国际友谊</div>
<div class="c" style="left:86px;top:582px;width:75px;height:25px;line-height:25px;">24-06-05</div>
<div class="c" style="left:162px;top:582px;width:132px;height:25px;line-height:25px;"><span class="g">摩洛哥U23</span></div>
<div class="c" style="left:295px;top:582px;width:89px;height:25px;line-height:25px;"><span class="r">2-2</span>(0-0)</div>
<div class="c" style="left:385px;top:582px;width:38px;height:25px;line-height:25px;">0-0</div>
<div class="c" style="left:424px;top:582px;width:88px;height:25px;line-height:25px;">比利时U21</div>
<div class="c" style="left:513px;top:582px;width:48px;height:25px;line-height:25px;"></div>
<div class="c" style="left:562px;top:582px;width:83px;height:25px;line-height:25px;"></div>
<div class="c" style="left:646px;top:582px;width:51px;height:25px;line-height:25px;"></div>
<div class="c" style="left:698px;top:582px;width:65px;height:25px;line-height:25px;">1.98</div>
<div class="c" style="left:764px;top:582px;width:65px;height:25px;line-height:25px;">3.38</div>
<div class="c" style="left:830px;top:582px;width:67px;height:25px;line-height:25px;">3.33</div>
<div class="c" style="left:898px;top:582px;width:37px;height:25px;line-height:25px;"><span class="g">平</span></div>
<div class="c" style="left:936px;top:582px;width:37px;height:25px;line-height:25px;"></div>
<div class="c" style="left:974px;top:582px;width:57px;height:25px;line-height:25px;"></div>
<div style="left:85px;top:607px;width:427px;height:25px;background:#fff"></div>
<div style="left:897px;top:607px;width:134px;height:25px;background:#fff"></div>
<div style="left:512px;top:607px;width:185px;height:25px;background:#fdfaf8"></div>
<div style="left:697px;top:607px;width:200px;height:25px;background:#f0f7fb"></div>
<div style="left:5px;top:607px;width:80px;height:25px;background:#4465bf"></div>
<div class="c" style="left:5px;top:608px;width:80px;height:25px;line-height:25px;color:#fff">国际友谊</div>
<div class="c" style="left:86px;top:608px;width:75px;height:25px;line-height:25px;">24-03-27</div>
<div class="c" style="left:162px;top:608px;width:132px;height:25px;line-height:25px;"><span class="g">摩洛哥U23(中)</span></div>
<div class="c" style="left:295px;top:608px;width:89px;height:25px;line-height:25px;"><span class="r">2-0</span>(1-0)</div>
<div class="c" style="left:385px;top:608px;width:38px;height:25px;line-height:25px;">0-0</div>
<div class="c" style="left:424px;top:608px;width:88px;height:25px;line-height:25px;">威尔斯U21</div>
<div class="c" style="left:513px;top:608px;width:48px;height:25px;line-height:25px;"></div>
<div class="c" style="left:562px;top:608px;width:83px;height:25px;line-height:25px;"></div>
<div class="c" style="left:646px;top:608px;width:51px;height:25px;line-height:25px;"></div>
<div class="c" style="left:698px;top:608px;width:65px;height:25px;line-height:25px;"></div>
<div class="c" style="left:764px;top:608px;width:65px;height:25px;line-height:25px;"></div>
<div class="c" style="left:830px;top:608px;width:67px;height:25px;line-height:25px;"></div>
<div class="c" style="left:898px;top:608px;width:37px;height:25px;line-height:25px;"><span class="r">胜</span></div>
<div class="c" style="left:936px;top:608px;width:37px;height:25px;line-height:25px;"></div>
<div class="c" style="left:974px;top:608px;width:57px;height:25px;line-height:25px;"></div>
<div style="left:85px;top:633px;width:427px;height:25px;background:#f0f0f0"></div>
<div style="left:897px;top:633px;width:134px;height:25px;background:#f0f0f0"></div>
<div style="left:512px;top:633px;width:185px;height:25px;background:#fdfaf8"></div>
<div style="left:697px;top:633px;width:200px;height:25px;background:#f0f7fb"></div>
<div style="left:5px;top:633px;width:80px;height:25px;background:#4465bf"></div>
<div class="c" style="left:5px;top:634px;width:80px;height:25px;line-height:25px;color:#fff">国际友谊</div>
<div class="c" style="left:86px;top:634px;width:75px;height:25px;line-height:25px;">24-03-23</div>
<div class="c" style="left:162px;top:634px;width:132px;height:25px;line-height:25px;"><span class="g">摩洛哥U23(中)</span></div>
<div class="c" style="left:295px;top:634px;width:89px;height:25px;line-height:25px;"><span class="r">0-1</span>(0-1)</div>
<div class="c" style="left:385px;top:634px;width:38px;height:25px;line-height:25px;">10-2</div>
<div class="c" style="left:424px;top:634px;width:88px;height:25px;line-height:25px;">乌克兰U21</div>
<div class="c" style="left:513px;top:634px;width:48px;height:25px;line-height:25px;">0.83</div>
<div class="c" style="left:562px;top:634px;width:83px;height:25px;line-height:25px;">一/球半</div>
<div class="c" style="left:646px;top:634px;width:51px;height:25px;line-height:25px;">0.99</div>
<div class="c" style="left:698px;top:634px;width:65px;height:25px;line-height:25px;">1.35</div>
<div class="c" style="left:764px;top:634px;width:65px;height:25px;line-height:25px;">4.79</div>
<div class="c" style="left:830px;top:634px;width:67px;height:25px;line-height:25px;">6.99</div>
<div class="c" style="left:898px;top:634px;width:37px;height:25px;line-height:25px;"><span class="b">负</span></div>
<div class="c" style="left:936px;top:634px;width:37px;height:25px;line-height:25px;"><span class="b">输</span></div>
<div class="c" style="left:974px;top:634px;width:57px;height:25px;line-height:25px;"><span class="b">小</span></div>
<div style="left:85px;top:659px;width:427px;height:25px;background:#fff"></div>
<div style="left:897px;top:659px;width:134px;height:25px;background:#fff"></div>
<div style="left:512px;top:659px;width:185px;height:25px;background:#fdfaf8"></div>
<div style="left:697px;top:659px;width:200px;height:25px;background:#f0f7fb"></div>
<div style="left:5px;top:659px;width:80px;height:25px;background:#4465bf"></div>
<div class="c" style="left:5px;top:660px;width:80px;height:25px;line-height:25px;color:#fff">国际友谊</div>
<div class="c" style="left:86px;top:660px;width:75px;height:25px;line-height:25px;">23-11-21</div>
<div class="c" style="left:162px;top:660px;width:132px;height:25px;line-height:25px;"><span class="g">摩洛哥U23(中)</span></div>
<div class="c" style="left:295px;top:660px;width:89px;height:25px;line-height:25px;"><span class="r">1-0</span>(1-0)</div>
<div class="c" style="left:385px;top:660px;width:38px;height:25px;line-height:25px;">4-5</div>
<div class="c" style="left:424px;top:660px;width:88px;height:25px;line-height:25px;">美国U23</div>
<div class="c" style="left:513px;top:660px;width:48px;height:25px;line-height:25px;">0.91</div>
<div class="c" style="left:562px;top:660px;width:83px;height:25px;line-height:25px;">受平/半</div>
<div class="c" style="left:646px;top:660px;width:51px;height:25px;line-height:25px;">0.97</div>
<div class="c" style="left:698px;top:660px;width:65px;height:25px;line-height:25px;">2.99</div>
<div class="c" style="left:764px;top:660px;width:65px;height:25px;line-height:25px;">3.38</div>
<div class="c" style="left:830px;top:660px;width:67px;height:25px;line-height:25px;">2.15</div>
<div class="c" style="left:898px;top:660px;width:37px;height:25px;line-height:25px;"><span class="r">胜</span></div>
<div class="c" style="left:936px;top:660px;width:37px;height:25px;line-height:25px;"><span class="r">赢</span></div>
<div class="c" style="left:974px;top:660px;width:57px;height:25px;line-height:25px;"><span class="b">小</span></div>
<div style="left:85px;top:685px;width:427px;height:25px;background:#f0f0f0"></div>
<div style="left:897px;top:685px;width:134px;height:25px;background:#f0f0f0"></div>
<div style="left:512px;top:685px;width:185px;height:25px;background:#fdfaf8"></div>
<div style="left:697px;top:685px;width:200px;height:25px;background:#f0f7fb"></div>
<div style="left:5px;top:685px;width:80px;height:25px;background:#4465bf"></div>
<div class="c" style="left:5px;top:686px;width:80px;height:25px;line-height:25px;color:#fff">国际友谊</div>
<div class="c" style="left:86px;top:686px;width:75px;height:25px;line-height:25px;">23-11-16</div>
<div class="c" style="left:162px;top:686px;width:132px;height:25px;line-height:25px;"><span class="g">摩洛哥U23</span></div>
<div class="c" style="left:295px;top:686px;width:89px;height:25px;line-height:25px;"><span class="r">0-3</span>(0-2)</div>
<div class="c" style="left:385px;top:686px;width:38px;height:25px;line-height:25px;">5-3</div>
<div class="c" style="left:424px;top:686px;width:88px;height:25px;line-height:25px;">丹麦U21</div>
<div class="c" style="left:513px;top:686px;width:48px;height:25px;line-height:25px;">1.02</div>
<div class="c" style="left:562px;top:686px;width:83px;height:25px;line-height:25px;">半/一</div>
<div class="c" style="left:646px;top:686px;width:51px;height:25px;line-height:25px;">0.80</div>
<div class="c" style="left:698px;top:686px;width:65px;height:25px;line-height:25px;">1.66</div>
<div class="c" style="left:764px;top:686px;width:65px;height:25px;line-height:25px;">3.94</div>
<div class="c" style="left:830px;top:686px;width:67px;height:25px;line-height:25px;">4.17</div>
<div class="c" style="left:898px;top:686px;width:37px;height:25px;line-height:25px;"><span class="b">负</span></div>
<div class="c" style="left:936px;top:686px;width:37px;height:25px;line-height:25px;"><span class="b">输</span></div>
<div class="c" style="left:974px;top:686px;width:57px;height:25px;line-height:25px;"><span class="g">走</span></div>
<div style="left:5px;top:711px;width:1026px;height:25px;background:#fff"></div>
<div class="c" style="left:5px;top:712px;width:1026px;height:25px;line-height:25px;letter-spacing:0.2px">近<span class="r">10</span>场,胜5平1负4, 胜率:<span class="r">50%</span> 让胜率:<span class="r">50%</span> 大率:<span class="r">37.5%</span> 单率:<span class="r">70%</span></div>
<div style="left:4px;top:411px;width:1028px;height:1px;background:#bdbdbd"></div>
<div style="left:512px;top:431px;width:520px;height:1px;background:#bdbdbd"></div>
<div style="left:4px;top:450px;width:1028px;height:1px;background:#bdbdbd"></div>
<div style="left:4px;top:476px;width:1028px;height:1px;background:#bdbdbd"></div>
<div style="left:4px;top:502px;width:1028px;height:1px;background:#bdbdbd"></div>
<div style="left:4px;top:528px;width:1028px;height:1px;background:#bdbdbd"></div>
<div style="left:4px;top:554px;width:1028px;height:1px;background:#bdbdbd"></div>
<div style="left:4px;top:580px;width:1028px;height:1px;background:#bdbdbd"></div>
<div style="left:4px;top:606px;width:1028px;height:1px;background:#bdbdbd"></div>
<div style="left:4px;top:632px;width:1028px;height:1px;background:#bdbdbd"></div>
<div style="left:4px;top:658px;width:1028px;height:1px;background:#bdbdbd"></div>
<div style="left:4px;top:684px;width:1028px;height:1px;background:#bdbdbd"></div>
<div style="left:4px;top:710px;width:1028px;height:1px;background:#bdbdbd"></div>
<div style="left:4px;top:736px;width:1028px;height:1px;background:#bdbdbd"></div>
<div style="left:4px;top:411px;width:1px;height:326px;background:#bdbdbd"></div>
<div style="left:1031px;top:411px;width:1px;height:326px;background:#bdbdbd"></div>
<div style="left:85px;top:411px;width:1px;height:300px;background:#bdbdbd"></div>
<div style="left:161px;top:411px;width:1px;height:300px;background:#bdbdbd"></div>
<div style="left:294px;top:411px;width:1px;height:300px;background:#bdbdbd"></div>
<div style="left:384px;top:411px;width:1px;height:300px;background:#bdbdbd"></div>
<div style="left:423px;top:411px;width:1px;height:300px;background:#bdbdbd"></div>
<div style="left:512px;top:411px;width:1px;height:300px;background:#bdbdbd"></div>
<div style="left:561px;top:431px;width:1px;height:280px;background:#bdbdbd"></div>
<div style="left:645px;top:431px;width:1px;height:280px;background:#bdbdbd"></div>
<div style="left:697px;top:411px;width:1px;height:300px;background:#bdbdbd"></div>
<div style="left:763px;top:431px;width:1px;height:280px;background:#bdbdbd"></div>
<div style="left:829px;top:431px;width:1px;height:280px;background:#bdbdbd"></div>
<div style="left:897px;top:411px;width:1px;height:300px;background:#bdbdbd"></div>
<div style="left:935px;top:431px;width:1px;height:280px;background:#bdbdbd"></div>
<div style="left:973px;top:431px;width:1px;height:280px;background:#bdbdbd"></div>
<div style="left:545px;top:412px;width:60px;height:19px;background:#fff;border:1px solid #767676;border-radius:1px;"></div>
<div class="c" style="left:550px;top:412px;width:50px;height:19px;font-size:13px;line-height:19px;color:#000;text-align:left;white-space:nowrap">Crow*</div>
<svg style="position:absolute;left:590px;top:418px" width="11" height="8"><polyline points="1,1.5 5.5,5.5 10,1.5" fill="none" stroke="#000" stroke-width="2"/></svg>
<div style="left:613px;top:412px;width:51px;height:19px;background:#fff;border:1px solid #767676;border-radius:1px;"></div>
<div class="c" style="left:618px;top:412px;width:41px;height:19px;font-size:13px;line-height:19px;color:#000;text-align:left;white-space:nowrap">终指</div>
<svg style="position:absolute;left:649px;top:418px" width="11" height="8"><polyline points="1,1.5 5.5,5.5 10,1.5" fill="none" stroke="#000" stroke-width="2"/></svg>
<div style="left:733px;top:412px;width:70px;height:19px;background:#fff;border:1px solid #767676;border-radius:1px;"></div>
<div class="c" style="left:738px;top:412px;width:60px;height:19px;font-size:13px;line-height:19px;color:#000;text-align:left;white-space:nowrap">平均值</div>
<svg style="position:absolute;left:788px;top:418px" width="11" height="8"><polyline points="1,1.5 5.5,5.5 10,1.5" fill="none" stroke="#000" stroke-width="2"/></svg>
<div style="left:810px;top:412px;width:51px;height:19px;background:#fff;border:1px solid #767676;border-radius:1px;"></div>
<div class="c" style="left:815px;top:412px;width:41px;height:19px;font-size:13px;line-height:19px;color:#000;text-align:left;white-space:nowrap">终指</div>
<svg style="position:absolute;left:846px;top:418px" width="11" height="8"><polyline points="1,1.5 5.5,5.5 10,1.5" fill="none" stroke="#000" stroke-width="2"/></svg>
<div style="left:939px;top:412px;width:50px;height:19px;background:#fff;border:1px solid #767676;border-radius:1px;"></div>
<div class="c" style="left:944px;top:412px;width:40px;height:19px;font-size:13px;line-height:19px;color:#000;text-align:left;white-space:nowrap">全场</div>
<svg style="position:absolute;left:974px;top:418px" width="11" height="8"><polyline points="1,1.5 5.5,5.5 10,1.5" fill="none" stroke="#000" stroke-width="2"/></svg>
</body></html>
